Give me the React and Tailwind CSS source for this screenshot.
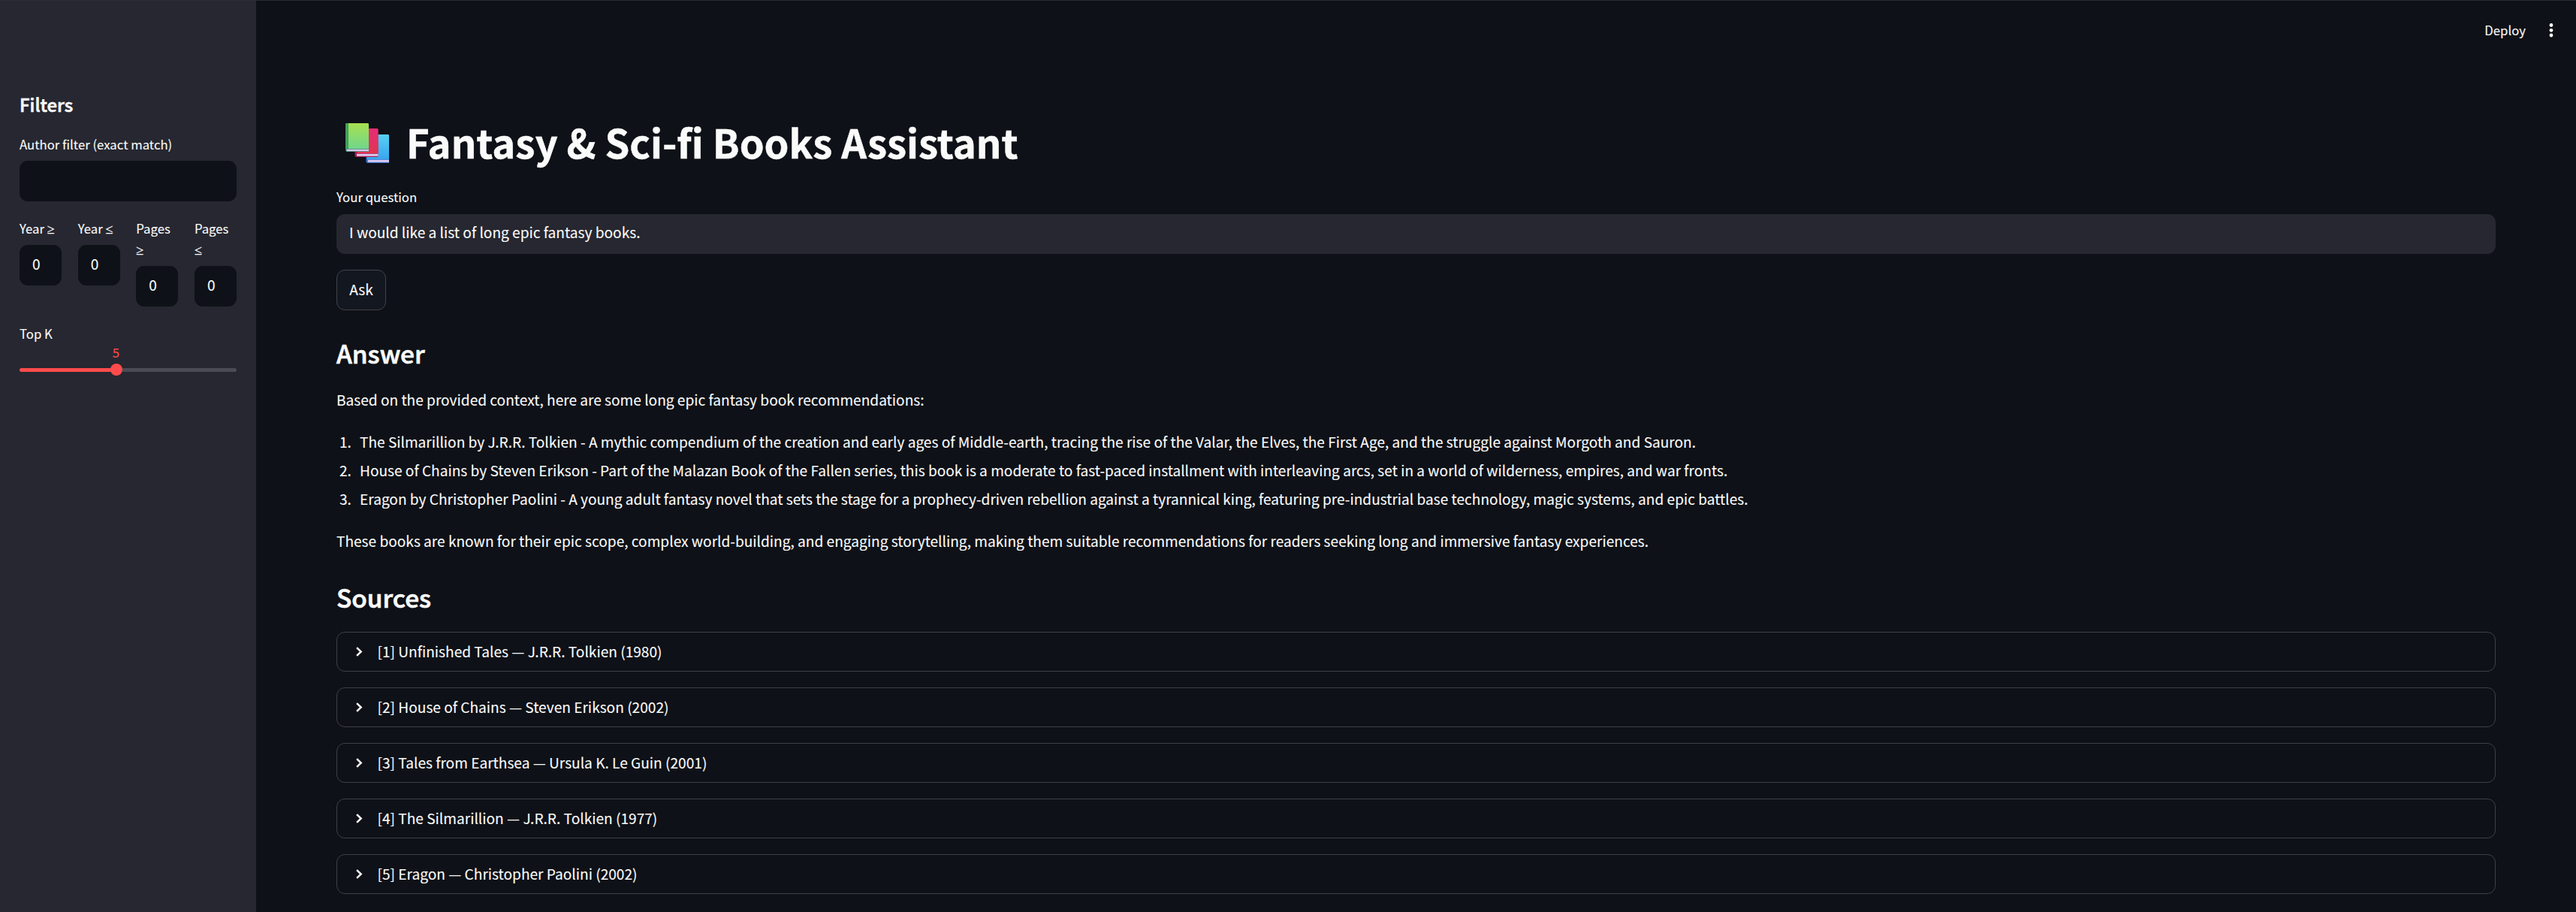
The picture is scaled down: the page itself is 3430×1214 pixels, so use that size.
const recommendations = [
  "The Silmarillion by J.R.R. Tolkien - A mythic compendium of the creation and early ages of Middle-earth, tracing the rise of the Valar, the Elves, the First Age, and the struggle against Morgoth and Sauron.",
  "House of Chains by Steven Erikson - Part of the Malazan Book of the Fallen series, this book is a moderate to fast-paced installment with interleaving arcs, set in a world of wilderness, empires, and war fronts.",
  "Eragon by Christopher Paolini - A young adult fantasy novel that sets the stage for a prophecy-driven rebellion against a tyrannical king, featuring pre-industrial base technology, magic systems, and epic battles.",
];

const sources = [
  "[1] Unfinished Tales — J.R.R. Tolkien (1980)",
  "[2] House of Chains — Steven Erikson (2002)",
  "[3] Tales from Earthsea — Ursula K. Le Guin (2001)",
  "[4] The Silmarillion — J.R.R. Tolkien (1977)",
  "[5] Eragon — Christopher Paolini (2002)",
];

const ranges = [
  ["Year", "≥"],
  ["Year", "≤"],
  ["Pages", "≥"],
  ["Pages", "≤"],
];

function BooksIcon() {
  return (
    <svg viewBox="0 0 60 56" className="h-14 w-[60px]" aria-hidden="true">
      <defs>
        <linearGradient id="green" x1="0" y1="0" x2="0" y2="1">
          <stop offset="0" stopColor="#a8e04f" />
          <stop offset="1" stopColor="#70d78c" />
        </linearGradient>
        <linearGradient id="red" x1="0" y1="0" x2="0" y2="1">
          <stop offset="0" stopColor="#e52c77" />
          <stop offset="1" stopColor="#e2364f" />
        </linearGradient>
        <linearGradient id="blue" x1="0" y1="0" x2="0" y2="1">
          <stop offset="0" stopColor="#56d0f5" />
          <stop offset="1" stopColor="#38a6ee" />
        </linearGradient>
      </defs>
      <path d="M29 17h27a2 2 0 0 1 2 2v36H29.500a2 2 0 0 1-2-2V19z" fill="#3a78d6" />
      <path d="M31 17h25.500a1.500 1.500 0 0 1 1.500 1.500V50H29V17z" fill="url(#blue)" />
      <path d="M58 50.800H30v3h28z" fill="#dcc8ee" />
      <path d="M13 9h29a1.500 1.500 0 0 1 1.500 1.500V47H15a2.500 2.500 0 0 1-2.500-2.500z" fill="#b01e52" />
      <path d="M16 9h26a1.500 1.500 0 0 1 1.500 1.500V42H16z" fill="url(#red)" />
      <path d="M43.500 42.800H15v3h28.500z" fill="#dcc8ee" />
      <path d="M2 2h27.500a1.500 1.500 0 0 1 1.500 1.500V40H2a2 2 0 0 1-2-2V4a2 2 0 0 1 2-2z" fill="#2f7d62" />
      <path d="M2 2h27.500a1.500 1.500 0 0 1 1.500 1.500V36H0V4a2 2 0 0 1 2-2z" fill="url(#green)" />
      <path d="M2 2h2v34H0V4a2 2 0 0 1 2-2z" fill="#43a05a" />
      <path d="M31 36.700H1.500v2.600H31z" fill="#dcc8ee" />
    </svg>
  );
}

function RangeField({ label, sign }) {
  const symbol = <span className="font-['Noto_Sans'] text-[18px] leading-none [-webkit-text-stroke:0.3px]">{sign}</span>;
  return (
    <label className="flex min-w-0 flex-1 flex-col gap-2">
      <span className="text-[16.74px] leading-7">
        {label} {symbol}
      </span>
      <span className="flex h-[54px] items-center rounded-[11px] bg-[#0e1117] pb-1 pl-[17px] text-[19.1px]">0</span>
    </label>
  );
}

function Sidebar() {
  return (
    <aside className="flex w-[341px] shrink-0 flex-col bg-[#262730] pl-[26px] pr-[26px] pt-[122px]">
      <h2 className="text-[23.9px] font-medium leading-8 [-webkit-text-stroke:0.6px]">Filters</h2>
      <label className="mt-[23px] flex flex-col gap-2">
        <span className="text-[16.74px] leading-7">Author filter (exact match)</span>
        <span className="h-[54px] rounded-[11px] bg-[#0e1117]" />
      </label>
      <div className="mt-[22px] flex gap-[21.500px]">
        {ranges.map(([label, sign]) => (
          <RangeField key={label + sign} label={label} sign={sign} />
        ))}
      </div>
      <div className="mt-[22px] text-[16.74px] leading-7">Top K</div>
      <div className="-mt-px flex w-[257px] justify-center text-[16.74px] leading-6 text-[#ff4b4b]">5</div>
      <div className="mt-[3px] flex h-4 items-center">
        <div className="h-[5px] w-[123px] rounded-l-full bg-[#ff4b4b]" />
        <div className="-ml-0.5 size-4 shrink-0 rounded-full bg-[#ff4b4b]" />
        <div className="h-[5px] flex-1 rounded-r-full bg-[#4a4b55]" />
      </div>
    </aside>
  );
}

function SourceRow({ title }) {
  return (
    <div className="flex h-[53px] items-center rounded-[11px] border border-[#3e4045] pl-[25px]">
      <svg viewBox="0 0 9 13" className="mb-px h-[13px] w-[9px]" aria-hidden="true">
        <path d="M1.100 1.100L6.700 6.500L1.100 11.900" fill="none" stroke="#fafafa" strokeWidth="2.500" />
      </svg>
      <span className="ml-[19.500px] pb-px text-[19.12px]">{title}</span>
    </div>
  );
}

export default function App() {
  return (
    <div className="flex h-[1214px] flex-col overflow-hidden border-t border-[#2b2c31] bg-[#0e1117] font-['Noto_Sans_CJK_SC',sans-serif] text-[#fafafa] [-webkit-text-stroke:0.1px]">
      <div className="flex flex-1">
        <Sidebar />
        <main className="flex min-w-0 flex-1 flex-col pl-[107px] pr-[107px]">
          <header className="-mr-[107px] flex h-20 items-center justify-end pb-0.5 pr-[30px]">
            <span className="text-[16.74px] leading-7">Deploy</span>
            <svg viewBox="0 0 6 20" className="ml-[31px] h-5 w-1.5" fill="#fafafa" aria-hidden="true">
              <circle cx="3" cy="3.500" r="2.400" />
              <circle cx="3" cy="10.300" r="2.400" />
              <circle cx="3" cy="17" r="2.400" />
            </svg>
          </header>
          <h1 className="mt-[72px] flex h-[70px] items-center text-[52.6px] font-bold leading-[70px] [-webkit-text-stroke:0.5px]">
            <span className="ml-3 mr-[21px] pt-1">
              <BooksIcon />
            </span>
            Fantasy &amp; Sci-fi Books Assistant
          </h1>
          <div className="mt-[25px] text-[16.74px] leading-7">Your question</div>
          <div className="mt-[9px] flex h-[53px] items-center rounded-[11px] bg-[#262730] pb-1 pl-[17px] text-[19.12px]">
            I would like a list of long epic fantasy books.
          </div>
          <button className="mt-[21px] flex h-[54px] w-[66px] items-center justify-center rounded-[11px] border border-[#41434a] bg-[#131720] pb-0.5 text-[19.1px]">
            Ask
          </button>
          <h2 className="mt-[35px] text-[33.4px] font-medium leading-[44px] [-webkit-text-stroke:0.7px]">Answer</h2>
          <p className="mt-[23px] text-[19.1px] leading-[34px]">
            Based on the provided context, here are some long epic fantasy book recommendations:
          </p>
          <ol className="mt-5 text-[19.1px] leading-[38px]">
            {recommendations.map((text, i) => (
              <li key={text} className="flex">
                <span className="w-[31px] shrink-0 pl-1">{i + 1}.</span>
                {text}
              </li>
            ))}
          </ol>
          <p className="mt-5 text-[19.1px] leading-[34px]">
            These books are known for their epic scope, complex world-building, and engaging storytelling, making them
            suitable recommendations for readers seeking long and immersive fantasy experiences.
          </p>
          <h2 className="mt-9 text-[33.4px] font-medium leading-[44px] [-webkit-text-stroke:0.7px]">Sources</h2>
          <div className="mt-6 flex flex-col gap-[21px]">
            {sources.map((title) => (
              <SourceRow key={title} title={title} />
            ))}
          </div>
        </main>
      </div>
    </div>
  );
}
